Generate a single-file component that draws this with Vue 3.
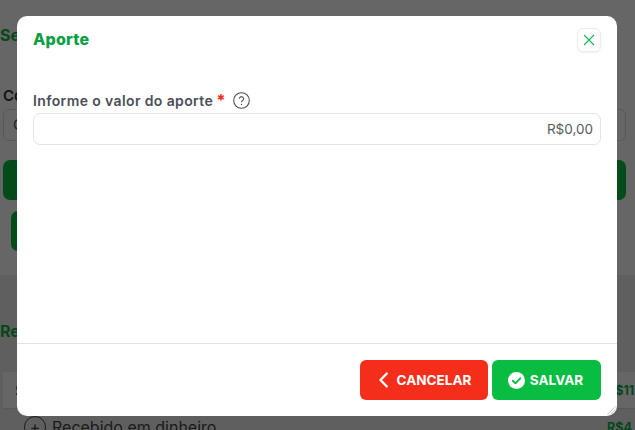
<script setup>
const summary = { label: 'S', value: 'R$11.', cash: 'Recebido em dinheiro', cashValue: 'R$4' }
</script>

<template>
  <div class="page">
    <div class="back">
      <div class="back-top">
        <h2 class="back-title">Se</h2>
        <label class="back-label">Co</label>
        <div class="back-input">C</div>
        <div class="back-btn wide"></div>
        <div class="back-btn short"></div>
      </div>
      <div class="back-bottom">
        <h2 class="back-title">Re</h2>
        <div class="back-row">
          <span>{{ summary.label }}</span>
          <b>{{ summary.value }}</b>
        </div>
        <div class="back-row plain">
          <span class="plus">+</span>
          <span>{{ summary.cash }}</span>
          <b>{{ summary.cashValue }}</b>
        </div>
      </div>
    </div>

    <div class="overlay">
      <section class="modal">
        <header class="modal-head">
          <h1>Aporte</h1>
          <button class="close" type="button" aria-label="Fechar">
            <svg width="14" height="14" viewBox="0 0 14 14" fill="none">
              <path d="M2 2l10 10M12 2L2 12" stroke="#12b553" stroke-width="1.1" />
            </svg>
          </button>
        </header>
        <div class="modal-body">
          <div class="label-row">
            <label>Informe o valor do aporte</label>
            <span class="req">*</span>
            <svg class="help" width="17" height="17" viewBox="0 0 17 17" fill="none">
              <circle cx="8.5" cy="8.5" r="7.8" stroke="#4b4f58" stroke-width="1.1" />
              <path d="M6.4 6.8a2.1 2.1 0 1 1 3.3 1.7c-.8.5-1.2.9-1.2 1.7" stroke="#4b4f58" stroke-width="1.1" />
              <circle cx="8.5" cy="12.4" r=".7" fill="#4b4f58" />
            </svg>
          </div>
          <input class="money" type="text" value="R$0,00" />
        </div>
        <footer class="modal-foot">
          <button class="btn cancel" type="button">
            <svg width="9" height="16" viewBox="0 0 9 16" fill="none">
              <path d="M7.8 1.5L1.5 8l6.3 6.5" stroke="#fff" stroke-width="2.4" stroke-linecap="round" stroke-linejoin="round" />
            </svg>
            CANCELAR
          </button>
          <button class="btn save" type="button">
            <svg width="17" height="17" viewBox="0 0 17 17">
              <circle cx="8.5" cy="8.5" r="8.5" fill="#fff" />
              <path d="M4.8 8.8l2.6 2.5 4.8-5" stroke="#08bd42" stroke-width="1.9" fill="none" stroke-linecap="round" stroke-linejoin="round" />
            </svg>
            SALVAR
          </button>
        </footer>
        <svg class="grip" width="10" height="10" viewBox="0 0 10 10">
          <path d="M9.5 1.5l-8 8M9.5 4.5l-5 5M9.5 7.5l-2 2" stroke="#c4c4c4" stroke-width="1" />
        </svg>
      </section>
    </div>
  </div>
</template>

<style>
html, body {
  margin: 0;
  overflow: hidden;
}
</style>

<style scoped>
.page {
  position: relative;
  width: 635px;
  height: 430px;
  overflow: hidden;
  font-family: Inter, "Noto Sans", sans-serif;
  background: #eee;
}

.back {
  width: 650px;
}

.back-top {
  height: 275px;
  box-sizing: border-box;
  padding-top: 25px;
  background: #fff;
}

.back-bottom {
  padding-top: 46px;
}

.back-title {
  margin: 0;
  font-size: 16px;
  line-height: 20px;
  font-weight: 700;
  color: #12b050;
}

.back-label {
  display: block;
  width: 20px;
  margin: 41px 0 0 3px;
  font-size: 15px;
  line-height: 20px;
  font-weight: 600;
  color: #333;
}

.back-input {
  width: 623px;
  height: 32px;
  box-sizing: border-box;
  margin: 3px 0 0 3px;
  padding-left: 9px;
  line-height: 30px;
  border: 1px solid #ddd;
  border-radius: 6px;
  font-size: 15px;
  color: #555;
}

.back-btn {
  height: 40px;
  background: #08bd42;
  border-radius: 7px;
}

.back-btn.wide {
  width: 623px;
  margin: 19px 0 0 3px;
}

.back-btn.short {
  width: 300px;
  margin: 11px 0 0 11px;
}

.back-row {
  display: flex;
  align-items: center;
  height: 36px;
  margin: 31px 0 0 3px;
  padding-left: 12px;
  background: #fff;
  border-bottom: 1px solid #ddd;
  font-size: 15px;
  color: #333;
}

.back-row b {
  width: 43px;
  margin-left: auto;
  font-size: 12.5px;
  color: #12b050;
}

.back-row.plain {
  height: 36px;
  margin-top: 0;
  padding-left: 21px;
  gap: 6px;
  background: none;
  border: 0;
  font-size: 16px;
  color: #444;
}

.plus {
  display: inline-flex;
  align-items: center;
  justify-content: center;
  width: 20px;
  height: 20px;
  border: 1px solid #444;
  border-radius: 50%;
  font-size: 16px;
}

.overlay {
  position: absolute;
  inset: 0;
  background: rgba(0, 0, 0, 0.6);
}

.modal {
  position: absolute;
  left: 17px;
  top: 16px;
  width: 600px;
  height: 400px;
  display: flex;
  flex-direction: column;
  background: #fff;
  border-radius: 10px;
  overflow: hidden;
}

.modal-head {
  display: flex;
  align-items: center;
  justify-content: space-between;
  height: 47px;
  padding: 0 16px;
}

.modal-head h1 {
  margin: 0 0 2px;
  font-size: 16px;
  font-weight: 800;
  letter-spacing: 0.2px;
  color: #0a9e45;
}

.close {
  display: flex;
  align-items: center;
  justify-content: center;
  width: 24px;
  height: 24px;
  margin-top: 1px;
  padding: 0;
  background: #fff;
  border: 1px solid #ececec;
  border-radius: 6px;
  box-shadow: 0 1px 2px rgba(0, 0, 0, 0.06);
}

.modal-body {
  flex: 1;
  padding: 27px 16px 0;
}

.label-row {
  display: flex;
  align-items: center;
  height: 20px;
}

.label-row label {
  font-size: 14px;
  font-weight: 600;
  letter-spacing: 0.38px;
  color: #4b4f58;
}

.req {
  align-self: flex-start;
  margin-left: 3px;
  font-size: 16px;
  line-height: 20px;
  font-weight: 800;
  color: #f52e1c;
}

.help {
  margin-left: 8px;
}

.money {
  display: block;
  width: 100%;
  box-sizing: border-box;
  height: 32px;
  margin-top: 3px;
  padding: 0 7px;
  border: 1px solid #e4e4e7;
  border-radius: 7px;
  outline: none;
  font-family: inherit;
  font-size: 13.5px;
  text-align: right;
  color: #555b63;
}

.modal-foot {
  display: flex;
  justify-content: flex-end;
  gap: 4px;
  height: 73px;
  box-sizing: border-box;
  padding: 16px 16px 0;
  border-top: 1px solid #e2e2e2;
}

.btn {
  display: flex;
  align-items: center;
  justify-content: center;
  height: 40px;
  padding: 0;
  border: 0;
  border-radius: 6px;
  font-family: inherit;
  font-size: 13.5px;
  font-weight: 700;
  color: #fff;
}

.cancel {
  width: 128px;
  gap: 9px;
  padding-left: 2px;
  background: #f52e1c;
}

.save {
  width: 109px;
  gap: 5px;
  padding-right: 2px;
  background: #08bd42;
}

.grip {
  position: absolute;
  right: 1px;
  bottom: 1px;
}
</style>
